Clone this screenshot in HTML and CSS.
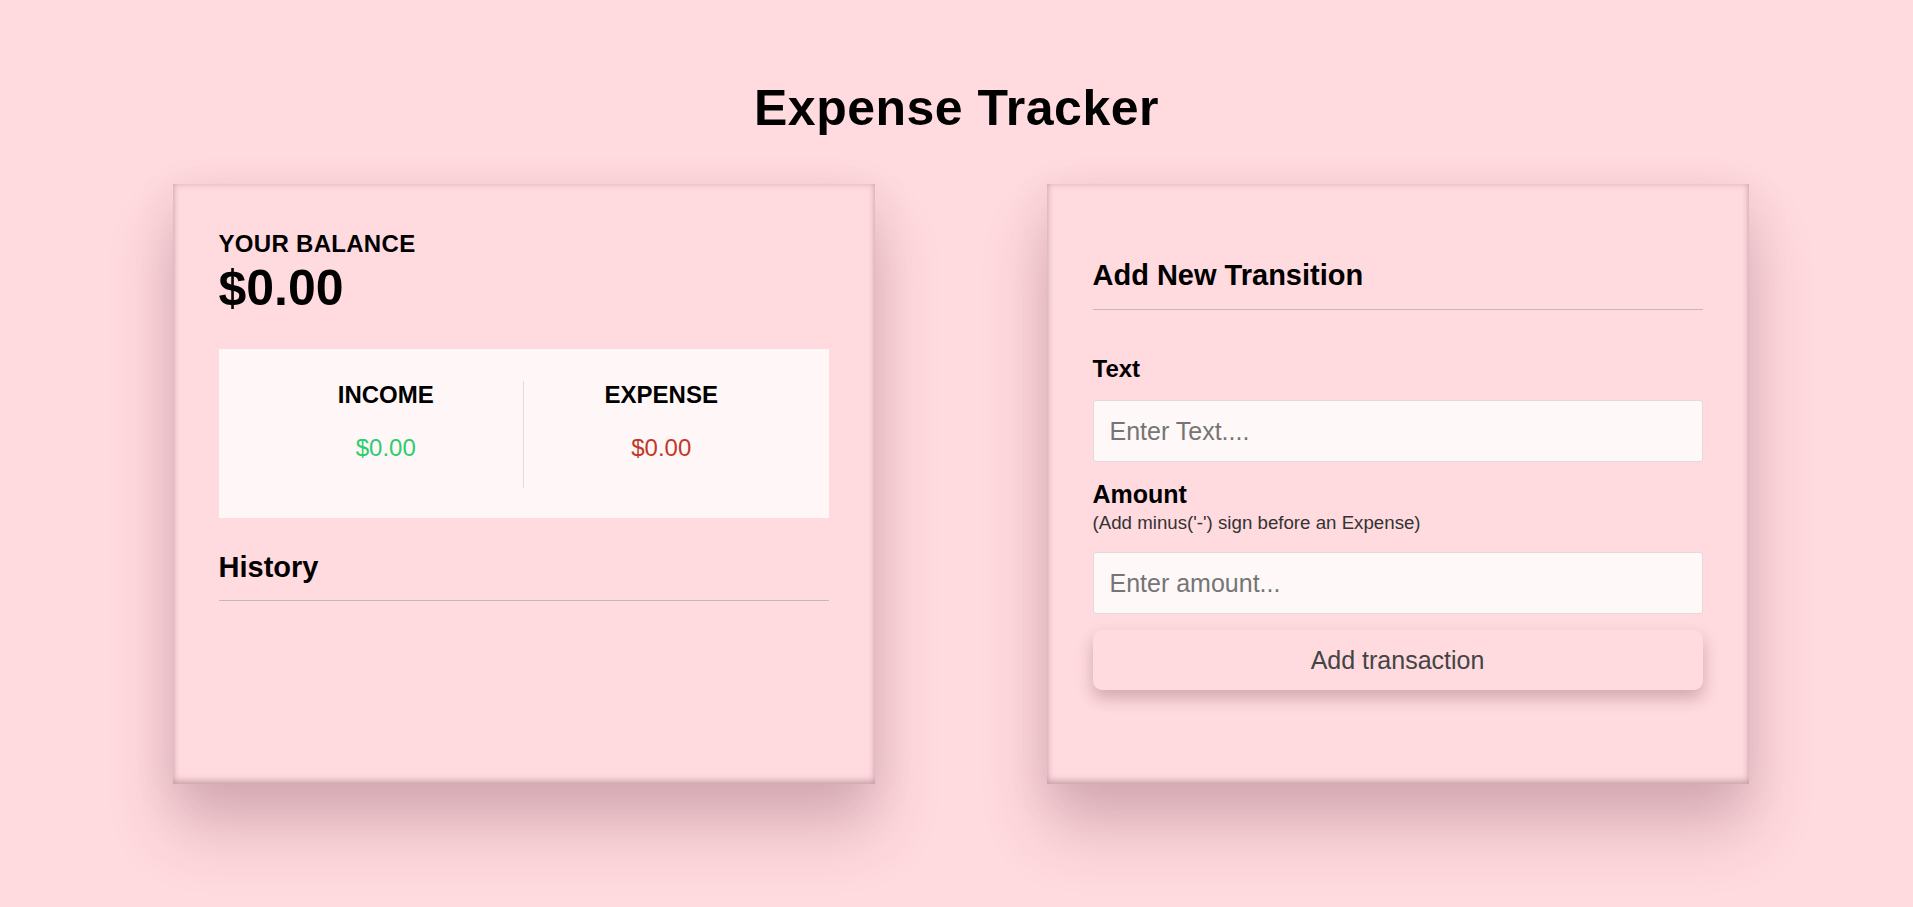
FILE: index.html
```html
<!DOCTYPE html>
<html lang="en">
<head>
<meta charset="utf-8">
<title>Expense Tracker</title>
<link rel="stylesheet" href="styles.css">
</head>
<body>
<div class="page">
  <h1 class="title">Expense Tracker</h1>
  <div class="cards">
    <section class="card">
      <h4 class="balance-label">YOUR BALANCE</h4>
      <h2 class="balance">$0.00</h2>
      <div class="summary">
        <div class="col col-income">
          <h4 class="col-title">INCOME</h4>
          <p class="money plus">$0.00</p>
        </div>
        <div class="col">
          <h4 class="col-title">EXPENSE</h4>
          <p class="money minus">$0.00</p>
        </div>
      </div>
      <h3 class="section-title history">History</h3>
      <ul class="list"></ul>
    </section>
    <section class="card">
      <h3 class="section-title add-title">Add New Transition</h3>
      <form class="form">
        <label class="label label-text" for="text">Text</label>
        <input class="field" type="text" id="text" placeholder="Enter Text....">
        <label class="label label-amount" for="amount">Amount</label>
        <div class="hint">(Add minus('-') sign before an Expense)</div>
        <input class="field field-amount" type="text" id="amount" placeholder="Enter amount...">
        <button class="btn" type="button">Add transaction</button>
      </form>
    </section>
  </div>
</div>
</body>
</html>
```
FILE: styles.css
```css
* { box-sizing: border-box; }
html, body { margin: 0; padding: 0; }
body {
  background: #ffdadf;
  font-family: "Liberation Sans", Arial, sans-serif;
  color: #000;
  min-height: 907px;
  overflow: hidden;
}
.page { padding-top: 78px; }
.title {
  margin: 0 0 46px;
  font-size: 50px;
  line-height: 60px;
  letter-spacing: 0.5px;
  text-align: center;
  font-weight: bold;
}
.cards {
  display: flex;
  justify-content: center;
  gap: 172px;
  padding-left: 8px;
}
.card {
  width: 702px;
  height: 600px;
  padding: 46px 46px 0;
  background: #ffdadf;
  box-shadow:
    0 45px 60px rgba(110, 50, 65, 0.24),
    0 10px 40px rgba(110, 50, 65, 0.10),
    inset 0 -4px 6px rgba(90, 50, 60, 0.22),
    inset 0 0 6px rgba(90, 50, 60, 0.22);
}
.balance-label {
  margin: 0;
  font-size: 24px;
  line-height: 28px;
  font-weight: bold;
  letter-spacing: 0.3px;
}
.balance {
  margin: 2px 0 0;
  font-size: 50px;
  line-height: 56px;
  font-weight: bold;
}
.summary {
  margin-top: 33px;
  background: #fff7f7;
  padding: 32px 30px 30px;
  display: flex;
}
.col {
  flex: 1;
  text-align: center;
  padding-bottom: 26px;
}
.col-income { border-right: 1px solid #e2dcdc; }
.col-title {
  margin: 0;
  font-size: 24px;
  line-height: 28px;
  font-weight: bold;
}
.money {
  margin: 25px 0 0;
  font-size: 24px;
  line-height: 28px;
}
.plus { color: #2ecc71; }
.minus { color: #c0392b; }
.section-title {
  margin: 0;
  font-size: 29px;
  line-height: 34px;
  font-weight: bold;
  padding-bottom: 16px;
  border-bottom: 1px solid #c4b8ba;
}
.history { margin-top: 32px; }
.add-title { margin-top: 28px; padding-bottom: 17px; }
.list { margin: 0; padding: 0; list-style: none; }
.form { display: flex; flex-direction: column; }
.label {
  display: block;
  font-weight: bold;
  font-size: 24px;
  line-height: 28px;
}
.label-text { margin-top: 45px; }
.label-amount { margin-top: 18px; font-size: 25px; line-height: 29px; }
.hint {
  margin-top: 3px;
  font-size: 18.7px;
  line-height: 22px;
  color: #333;
}
.field {
  display: block;
  width: 100%;
  height: 62px;
  margin-top: 17px;
  padding: 0 16px;
  background: #fff8f8;
  border: 1px solid #e0dada;
  border-radius: 3px;
  font-family: "Liberation Sans", Arial, sans-serif;
  font-size: 25px;
  color: #333;
  outline: none;
}
.field::placeholder { color: #757575; }
.field-amount { margin-top: 18px; }
.btn {
  display: block;
  width: 100%;
  height: 60px;
  margin-top: 16px;
  background: #ffdadf;
  border: none;
  border-radius: 9px;
  box-shadow: 0 8px 16px rgba(90, 40, 50, 0.28);
  font-family: "Liberation Sans", Arial, sans-serif;
  font-size: 25px;
  color: #444;
  cursor: pointer;
}
```
